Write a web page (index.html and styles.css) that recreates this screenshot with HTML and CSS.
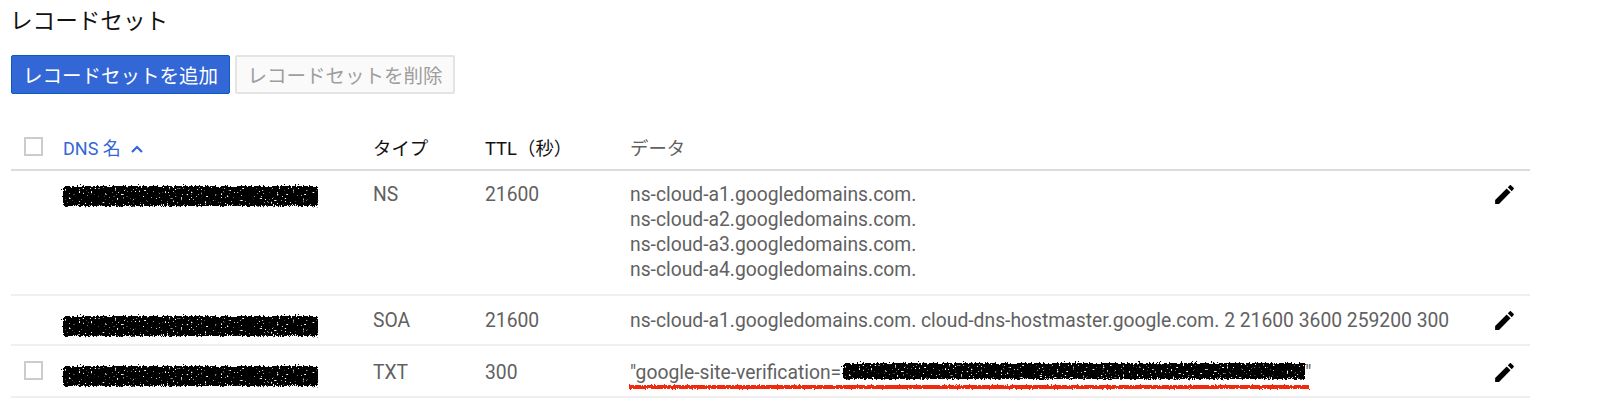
FILE: index.html

```html
<!DOCTYPE html>
<html lang="ja">
<head>
  <meta charset="UTF-8" />
  <title>レコードセット</title>
  <link rel="stylesheet" href="styles.css">
</head>
<body>
  <svg class="defs" width="0" height="0">
    <filter id="scribble" x="-5%" y="-40%" width="110%" height="180%">
      <feTurbulence type="fractalNoise" baseFrequency="0.5" numOctaves="3" seed="4" result="noise" />
      <feDisplacementMap in="SourceGraphic" in2="noise" scale="7" result="rough" />
      <feComponentTransfer in="noise" result="specks">
        <feFuncA type="linear" slope="14" intercept="-3.6" />
      </feComponentTransfer>
      <feComposite in="rough" in2="specks" operator="in" />
    </filter>
    <filter id="scribble-line" x="-2%" y="-100%" width="104%" height="300%">
      <feTurbulence type="fractalNoise" baseFrequency="0.6" numOctaves="2" seed="7" result="noise" />
      <feDisplacementMap in="SourceGraphic" in2="noise" scale="3" />
    </filter>
  </svg>

  <h1 class="title">レコードセット</h1>

  <div class="actions">
    <button class="btn btn-primary">レコードセットを追加</button>
    <button class="btn btn-disabled">レコードセットを削除</button>
  </div>

  <table class="records">
    <thead>
      <tr>
        <th class="col-check"><span class="checkbox"></span></th>
        <th class="col-name sorted">DNS 名
          <svg class="sort-icon" width="14" height="9" viewBox="0 0 14 9"><path d="M2 8l5-5 5 5" fill="none" stroke="#3367d6" stroke-width="2.2" /></svg>
        </th>
        <th class="col-type">タイプ</th>
        <th class="col-ttl">TTL（秒）</th>
        <th class="col-data">データ</th>
        <th class="col-edit"></th>
      </tr>
    </thead>
    <tbody>
      <tr class="row-ns">
        <td></td>
        <td><span class="redacted"></span></td>
        <td>NS</td>
        <td>21600</td>
        <td>ns-cloud-a1.googledomains.com.<br>ns-cloud-a2.googledomains.com.<br>ns-cloud-a3.googledomains.com.<br>ns-cloud-a4.googledomains.com.</td>
        <td class="col-edit">
          <svg class="edit-icon" viewBox="0 0 24 24"><path d="M3 17.25V21h3.75L17.81 9.94l-3.75-3.75L3 17.25zM20.71 7.04c.39-.39.39-1.02 0-1.41l-2.34-2.34c-.39-.39-1.02-.39-1.41 0l-1.83 1.83 3.75 3.75 1.83-1.83z" /></svg>
        </td>
      </tr>
      <tr class="row-soa">
        <td></td>
        <td><span class="redacted"></span></td>
        <td>SOA</td>
        <td>21600</td>
        <td>ns-cloud-a1.googledomains.com. cloud-dns-hostmaster.google.com. 2 21600 3600 259200 300</td>
        <td class="col-edit">
          <svg class="edit-icon" viewBox="0 0 24 24"><path d="M3 17.25V21h3.75L17.81 9.94l-3.75-3.75L3 17.25zM20.71 7.04c.39-.39.39-1.02 0-1.41l-2.34-2.34c-.39-.39-1.02-.39-1.41 0l-1.83 1.83 3.75 3.75 1.83-1.83z" /></svg>
        </td>
      </tr>
      <tr class="row-txt">
        <td class="col-check"><span class="checkbox"></span></td>
        <td><span class="redacted"></span></td>
        <td>TXT</td>
        <td>300</td>
        <td><span class="flagged">"google-site-verification=<span class="redacted redacted-value"></span>"</span></td>
        <td class="col-edit">
          <svg class="edit-icon" viewBox="0 0 24 24"><path d="M3 17.25V21h3.75L17.81 9.94l-3.75-3.75L3 17.25zM20.71 7.04c.39-.39.39-1.02 0-1.41l-2.34-2.34c-.39-.39-1.02-.39-1.41 0l-1.83 1.83 3.75 3.75 1.83-1.83z" /></svg>
        </td>
      </tr>
    </tbody>
  </table>
</body>
</html>
```

FILE: styles.css

```css
body {
  margin: 0;
  background: #fff;
  font-family: "Roboto", "Noto Sans CJK JP", sans-serif;
  font-size: 19.3px;
  color: #616161;
}
.defs {
  display: block;
  height: 0;
}
.title {
  margin: 0;
  padding: 8px 0 0 10px;
  font-size: 22.6px;
  font-weight: 400;
  line-height: 27px;
  color: #111;
}
.actions {
  display: flex;
  gap: 5px;
  margin: 20px 0 0 11px;
}
.btn {
  height: 39px;
  width: 219px;
  padding: 0;
  font-family: inherit;
  font-size: 19.5px;
  border-radius: 2px;
}
.btn-primary {
  background: #3367d6;
  border: 1px solid #0b5cc0;
  color: #fff;
}
.btn-disabled {
  width: 220px;
  background: #fafafa;
  border: 2px solid #e4e4e4;
  color: #9e9e9e;
}
.records {
  width: 1519px;
  margin: 30px 0 0 11px;
  border-collapse: collapse;
  table-layout: fixed;
}
.records th {
  height: 45px;
  padding: 0;
  text-align: left;
  font-size: 18.4px;
  font-weight: 400;
  color: #111;
  border-bottom: 2px solid #dcdcdc;
}
.records td {
  padding: 11px 0 12px;
  line-height: 25px;
  vertical-align: top;
  border-bottom: 2px solid #efefef;
  white-space: nowrap;
}
.records .row-soa td {
  padding: 12px 0 11px;
}
.records .row-txt td {
  padding: 14px 0 11px;
}
.records .col-check {
  width: 52px;
}
.records .col-name {
  width: 310px;
  font-size: 18px;
  color: #3367d6;
}
.records .col-type {
  width: 112px;
}
.records .col-ttl {
  width: 145px;
}
.records .col-data {
  width: 815px;
  color: #616161;
}
.checkbox {
  display: block;
  box-sizing: border-box;
  width: 19px;
  height: 19px;
  margin-left: 13px;
  border: 2px solid #ccc;
}
.row-txt .checkbox {
  margin-top: 1px;
}
.sort-icon {
  margin-left: 5px;
  vertical-align: 2px;
}
.redacted {
  display: block;
  width: 255px;
  height: 20px;
  margin-top: 4px;
  margin-bottom: -10px;
  background: #000;
  filter: url(#scribble);
}
.row-soa .redacted {
  margin-top: 8px;
}
.row-txt .redacted {
  margin-top: 6px;
}
.flagged {
  position: relative;
  display: inline-block;
}
.flagged::after {
  content: "";
  position: absolute;
  left: -1px;
  right: 2px;
  bottom: -4px;
  height: 4px;
  background: #f22c0c;
  filter: url(#scribble-line);
}
.row-txt .redacted-value {
  display: inline-block;
  width: 462px;
  height: 16px;
  margin: 0 0 0 2px;
  vertical-align: 0;
}
.edit-icon {
  display: block;
  width: 25px;
  height: 25px;
  margin-left: 47px;
  fill: #000;
}
```
